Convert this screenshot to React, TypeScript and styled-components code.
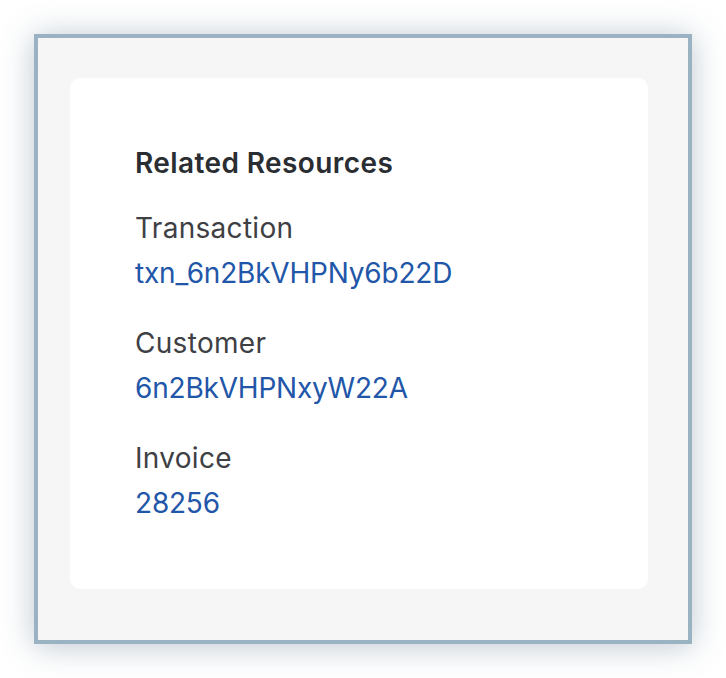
import React from 'react';
import styled, { createGlobalStyle } from 'styled-components';

const GlobalStyle = createGlobalStyle`
  html, body {
    margin: 0;
    padding: 0;
    background: #ffffff;
  }
  body {
    font-family: Inter, 'Noto Sans', 'Liberation Sans', sans-serif;
    -webkit-font-smoothing: antialiased;
  }
`;

type Resource = { label: string; value: string };

const resources: Resource[] = [
  { label: 'Transaction', value: 'txn_6n2BkVHPNy6b22D' },
  { label: 'Customer', value: '6n2BkVHPNxyW22A' },
  { label: 'Invoice', value: '28256' },
];

const App: React.FC = () => {
  return (
    <>
      <GlobalStyle />
      <Page>
        <Frame>
          <Card>
            <Title>Related Resources</Title>
            <List>
              {resources.map((r) => (
                <Item key={r.label}>
                  <Label>{r.label}</Label>
                  <Link href="#">{r.value}</Link>
                </Item>
              ))}
            </List>
          </Card>
        </Frame>
      </Page>
    </>
  );
};

export default App;

const Page = styled.div`
  padding: 34px;
`;

const Frame = styled.div`
  width: 658px;
  box-sizing: border-box;
  border: 4px solid #9ab2c1;
  background-color: #f6f6f6;
  padding: 40px 40px 51px 32px;
  box-shadow: 0px 2px 30px rgba(70, 100, 125, 0.36);
`;

const Card = styled.div`
  background-color: #ffffff;
  border-radius: 10px;
  padding: 69px 64px 64px 65px;
`;

const Title = styled.h2`
  margin: 0 0 27px 0;
  font-size: 28px;
  line-height: 32px;
  font-weight: 600;
  color: #2a2d31;
  letter-spacing: 0.4px;
`;

const List = styled.div`
  display: flex;
  flex-direction: column;
  gap: 26px;
`;

const Item = styled.div`
  display: flex;
  flex-direction: column;
  gap: 1px;
`;

const Label = styled.div`
  font-size: 28px;
  line-height: 44px;
  color: #3e4044;
  letter-spacing: 0.3px;
`;

const Link = styled.a`
  font-size: 28px;
  line-height: 44px;
  color: #2256a8;
  text-decoration: none;
  letter-spacing: -0.2px;
`;
